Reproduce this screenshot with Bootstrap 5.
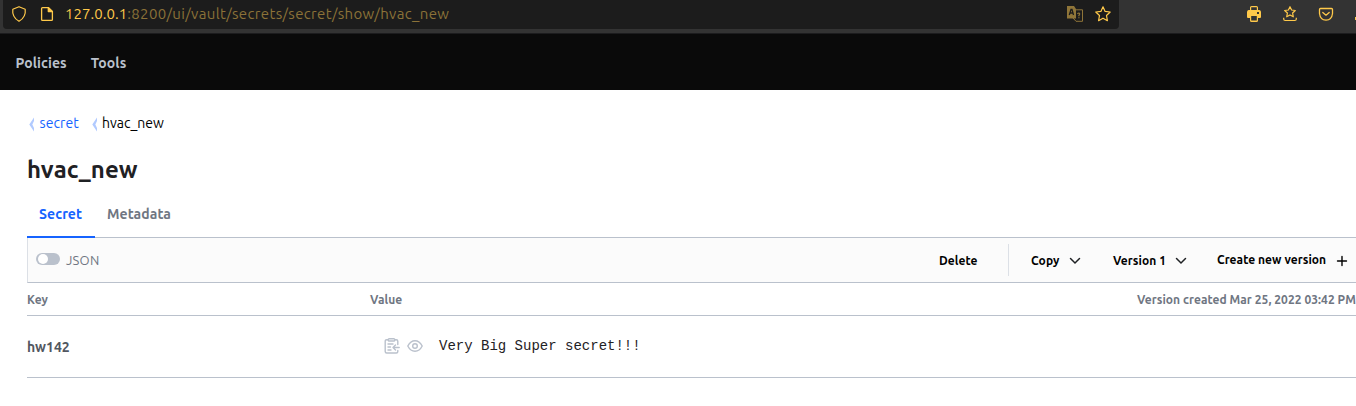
<!DOCTYPE html>
<html lang="en">
<head>
<meta charset="utf-8">
<title>Vault</title>
<link href="https://cdn.jsdelivr.net/npm/bootstrap@5.3.0/dist/css/bootstrap.min.css" rel="stylesheet">
<style>
body{font-family:Ubuntu,"Noto Sans",sans-serif;font-size:14px;line-height:20px;color:#1f2124;height:406px;overflow:hidden;background:#fff}
svg{display:block;flex:none}
span{white-space:nowrap;flex:none}
.browser-bar{height:34px;background:#333;border-bottom:1px solid #1c1c1e;color:#ffc94a}
.address{width:1116px;height:29px;margin-left:3px;padding:0 8px 2px;background:#1c1c1c;border-radius:0 0 4px 4px}
.url{width:1002px;margin-left:10px;font-size:15px;letter-spacing:.34px;color:#8b7238}
.url b{font-weight:400;letter-spacing:.05px;color:#ffc94a}
.dim{color:#8f7539}
.vault-nav{height:56px;padding:2px 15.500px 0;gap:24px;background:#0a0a0a;color:#bac1cc;font-weight:600;letter-spacing:.08px}
.vault-page{margin-left:27px}
.crumbs{height:66px;color:#000}
.crumbs a{color:#1563ff;text-decoration:none}
h1{font-size:24px;line-height:32px;font-weight:700;letter-spacing:.12px;margin:-2px 0 0;padding-bottom:6px}
.tabs-line{height:46px;border-bottom:1px solid #bac1cc;font-weight:600;letter-spacing:.08px;color:#6f7682}
.tab-on{width:68px;height:46px;padding:12px 0 0 12px;color:#1563ff;border-bottom:2px solid #1563ff}
.tools-line{height:45px;background:#fbfbfb;border-left:1px solid #dce0e6;border-bottom:1px solid #bac1cc;font-size:12px;font-weight:600;letter-spacing:.05px;color:#000}
.json-label{font-size:13px;font-weight:400;letter-spacing:.2px;color:#6f7682}
.toggle-pill{width:24px;height:12px;border-radius:6px;background:#bac1cc;padding:1px 2px}
.toggle-pill i{display:block;width:10px;height:10px;border-radius:50%;background:#fff}
.tool-label{padding-top:2px}
.rule{width:1px;height:32px;background:#dce0e6}
.head-line{height:33px;padding-top:2px;border-bottom:1px solid #bac1cc;font-size:12px;font-weight:600;letter-spacing:.05px;color:#6f7682}
.data-line{height:62px;border-bottom:1px solid #bac1cc;font-weight:600;color:#525761}
.key-col{width:343px}
.mono{font-family:"Liberation Mono",monospace;font-weight:400;color:#1f2124;padding-bottom:2px}
.pale{color:#bac1cc}
</style>
</head>
<body>
<div class="browser-bar d-flex">
  <div class="address d-flex align-items-center">
    <svg width="16" height="16" viewBox="0 0 16 16" fill="none" stroke="currentColor" stroke-width="1.2" stroke-linejoin="round"><path d="M8 .7 14.2 3.3C14.9 8.700 12.700 12.500 8 15.300 3.300 12.500 1.100 8.700 1.800 3.300Z"/></svg>
    <svg width="16" height="16" viewBox="0 0 16 16" fill="none" stroke="currentColor" stroke-width="1.300" stroke-linejoin="round" style="margin-left:12px"><path d="M3.500 1.600H9.500L13.400 5.500V13.500Q13.400 14.400 12.500 14.400H3.500Q2.600 14.400 2.600 13.500V2.500Q2.600 1.600 3.500 1.600Z"/><path d="M9.300 1.600V5.600H13.400Z" fill="currentColor"/></svg>
    <span class="url"><b>127.0.0.1</b>:8200/ui/vault/secrets/secret/show/hvac_new</span>
    <svg class="dim" width="17" height="16" viewBox="0 0 17 16"><path d="M0 0H7L9 3V12.500H0Z" fill="currentColor"/><path d="M8.500 3.800H15.500V15.300H9L6 12" fill="none" stroke="currentColor"/><path d="M2.300 9 4 3.500H5L6.500 9M3 7H6" fill="none" stroke="#1c1c1c" stroke-width="1.300"/><path d="M10.500 8Q11 7 12 7 13.500 7.800 11.900 9.300V10.300M11.900 11.200V12.300" fill="none" stroke="currentColor" stroke-width="1.200"/></svg>
    <svg width="16" height="16" viewBox="0 0 16 16" fill="none" stroke="currentColor" stroke-width="1.200" stroke-linejoin="round" style="margin-left:11px"><path d="m8 .8 2.100 4.600 5.100.6-3.700 3.500.9 5.200L8 12.200l-4.400 2.500.9-5.200L.8 6l5.100-.6Z"/></svg>
  </div>
  <div class="d-flex align-items-center" style="height:27px;margin-left:127px;gap:20px">
    <svg width="16" height="16" viewBox="0 0 16 16"><path d="M5.500 0H10.500Q12 0 12 1.500V4H13.500Q15 4.500 15 6V11Q15 12 14 12H12V14.500Q12 16 10.500 16H5.500Q4 16 4 14.500V12H2Q1 12 1 11V6Q1 4.500 2.500 4H4V1.500Q4 0 5.500 0Z" fill="currentColor"/><path d="M5.200 1.300H10.800V4H5.200ZM5.200 10H10.800V14.500H5.200ZM11 6H13V8H11Z" fill="#333"/></svg>
    <svg width="16" height="16" viewBox="0 0 16 16" fill="none" stroke="currentColor" stroke-width="1.200" stroke-linejoin="round"><path d="m8 .7 1.600 3.300 3.700.5-2.700 2.500.7 3.800L8 8.900l-3.300 1.900.7-3.800L2.700 4.500l3.700-.5ZM1.700 11.700V13Q1.700 14.500 3.200 14.500H12.800Q14.300 14.500 14.300 13V11.700"/></svg>
    <svg width="16" height="16" viewBox="0 0 16 16" fill="none" stroke="currentColor" stroke-width="1.300" stroke-linecap="round" stroke-linejoin="round"><path d="M2.500 2.500H13.500Q14.500 2.500 14.500 3.500V7.500Q13.800 13.900 8 14.200 2.200 13.900 1.500 7.500V3.500Q1.500 2.500 2.500 2.500ZM4.800 6.500 8 9.200 11.200 6.500"/></svg>
    <svg width="2" height="16" viewBox="0 0 2 16"><path d="M1 11H2V14H1Z" fill="currentColor"/></svg>
  </div>
</div>
<nav class="vault-nav d-flex align-items-center"><span>Policies</span><span>Tools</span></nav>
<main class="vault-page">
  <div class="crumbs d-flex align-items-center">
    <svg width="12" height="16" viewBox="0 0 12 16" style="margin-top:2px"><path d="M7 1.500V5L5.300 8.500 7 12V15.500L2.300 8.500Z" fill="#b1caff"/></svg>
    <a href="#" style="margin-left:.5px;letter-spacing:.1px">secret</a>
    <svg width="12" height="16" viewBox="0 0 12 16" style="margin:2px 0 0 11px"><path d="M7 1.500V5L5.300 8.500 7 12V15.500L2.300 8.500Z" fill="#b1caff"/></svg>
    <span>hvac_new</span>
  </div>
  <h1>hvac_new</h1>
  <div class="tabs-line d-flex"><div class="tab-on">Secret</div><span style="padding:12px 12px 0">Metadata</span></div>
  <div class="tools-line d-flex align-items-center">
    <div class="toggle-pill" style="margin:-3px 6px 0 8px"><i></i></div>
    <span class="json-label">JSON</span>
    <div class="d-flex align-items-center ms-auto" style="width:417px">
      <span class="tool-label" style="width:69px">Delete</span><div class="rule" style="margin-right:22px"></div>
      <span class="tool-label" style="width:38px">Copy</span>
      <svg width="12" height="8" viewBox="0 0 12 8" fill="none" stroke="#1f2124" stroke-width="1.500" stroke-linecap="round" style="margin-top:1px"><path d="M1.500 1.500 6 6 10.500 1.500"/></svg>
      <span class="tool-label" style="width:62px;margin-left:32px">Version 1</span>
      <svg width="12" height="8" viewBox="0 0 12 8" fill="none" stroke="#1f2124" stroke-width="1.500" stroke-linecap="round" style="margin-top:1px"><path d="M1.500 1.500 6 6 10.500 1.500"/></svg>
      <span style="width:119px;margin-left:30px">Create new version</span>
      <svg width="12" height="12" viewBox="0 0 12 12" stroke="#000" stroke-width="1.400" stroke-linecap="round" style="margin-top:1px"><path d="M6 1.500V10.500M1.500 6H10.500"/></svg>
    </div>
  </div>
  <div class="head-line d-flex align-items-center"><span class="key-col">Key</span><span>Value</span><span class="ms-auto">Version created Mar 25, 2022 03:42 PM</span></div>
  <div class="data-line d-flex align-items-center">
    <span class="key-col">hw142</span>
    <svg class="pale" width="16" height="16" viewBox="0 0 16 16" fill="none" stroke="currentColor" stroke-width="1.400" stroke-linecap="round" stroke-linejoin="round" style="margin:-2px 0 0 13.500px"><path d="M4 1.700H2.700Q1.200 1.700 1.200 3.200V13.500Q1.200 15 2.700 15H12.300Q13.800 15 13.800 13.500V12.500M11 1.700H12.300Q13.800 1.700 13.800 3.200V6.500"/><rect x="4.200" y=".8" width="6.600" height="2.200" rx="1"/><path d="M4 6H9M4 9H6.500M4 12H7M15.200 9.500H9M11.500 7 9 9.500 11.500 12"/></svg>
    <svg class="pale" width="16" height="16" viewBox="0 0 16 16" fill="none" stroke="currentColor" stroke-width="1.400" style="margin:-2px 0 0 7.500px"><path d="M.8 8Q3.500 2.700 8 2.700T15.200 8Q12.500 13.300 8 13.300T.8 8Z"/><circle cx="8" cy="8" r="2.300"/></svg>
    <span class="mono" style="margin-left:16px">Very Big Super secret!!!</span>
  </div>
</main>
<script src="https://cdn.jsdelivr.net/npm/bootstrap@5.3.0/dist/js/bootstrap.bundle.min.js"></script>
</body>
</html>
